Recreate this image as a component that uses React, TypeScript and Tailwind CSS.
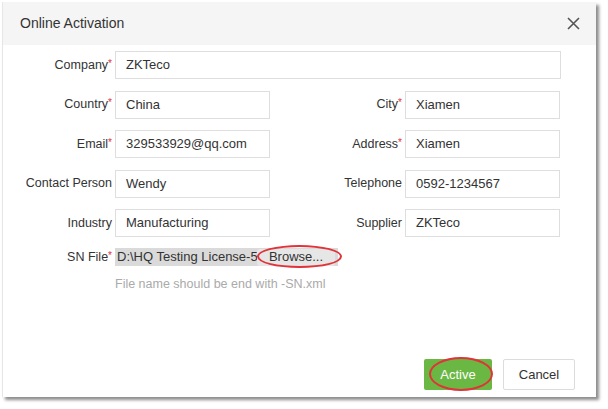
const font = { fontFamily: '"Liberation Sans", Arial, sans-serif' };

type Field = { label: string; value: string; required?: boolean };

const Label = ({ label, required, width }: { label: string; required?: boolean; width: string }) => (
    <div className={`${width} shrink-0 text-right text-[12.5px] text-[#333] leading-none`}>
        {label}
        {required && <span className="text-[#e0303a] text-[10px] align-top">*</span>}
    </div>
);

const Input = ({ value, width = 'w-[155px]' }: { value: string; width?: string }) => (
    <div className={`${width} h-[28px] ml-[3px] border border-[#dedede] bg-white flex items-center pl-[10px] text-[13px] text-[#333]`}>
        {value}
    </div>
);

const rows: [Field, Field][] = [
    [{ label: 'Country', value: 'China', required: true }, { label: 'City', value: 'Xiamen', required: true }],
    [{ label: 'Email', value: '329533929@qq.com', required: true }, { label: 'Address', value: 'Xiamen', required: true }],
    [{ label: 'Contact Person', value: 'Wendy' }, { label: 'Telephone', value: '0592-1234567' }],
    [{ label: 'Industry', value: 'Manufacturing' }, { label: 'Supplier', value: 'ZKTeco' }],
];

export default function App() {
    return (
        <div className="w-[608px] h-[409px] bg-white pt-[2px] pl-[2px]" style={font}>
            <div className="w-[594px] h-[395px] bg-white flex flex-col border-l border-[#e6e6e6] shadow-[3px_3px_3px_rgba(0,0,0,0.45)]">
                {/* Header */}
                <div className="h-[43px] bg-[#f5f5f5] flex items-center justify-between pl-[17px] pr-[16px]">
                    <span className="text-[14px] text-[#333]">Online Activation</span>
                    <svg width="13" height="13" viewBox="0 0 13 13" className="text-[#555]">
                        <path d="M1 1L12 12M12 1L1 12" stroke="currentColor" strokeWidth="1.6" />
                    </svg>
                </div>

                {/* Form */}
                <div className="flex flex-col gap-[11.5px] pt-[6px]">
                    <div className="flex items-center">
                        <Label label="Company" required width="w-[109px]" />
                        <Input value="ZKTeco" width="w-[446px]" />
                    </div>
                    {rows.map(([l, r]) => (
                        <div key={l.label} className="flex items-center">
                            <Label label={l.label} required={l.required} width="w-[109px]" />
                            <Input value={l.value} />
                            <Label label={r.label} required={r.required} width="w-[132px]" />
                            <Input value={r.value} />
                        </div>
                    ))}
                </div>

                {/* SN file */}
                <div className="flex items-center mt-[11px]">
                    <Label label="SN File" required width="w-[109px]" />
                    <div className="relative ml-[3px] w-[223px] h-[18px] bg-[#dadada] flex items-center text-[13px] text-[#333]">
                        <span className="w-[142px] overflow-hidden whitespace-nowrap pl-[2px]">D:\HQ Testing License-5(</span>
                        <span className="w-[78px] h-[17px] bg-[#e6e6e6] rounded-[3px] flex items-center justify-center">Browse...</span>
                        <div className="absolute left-[142px] top-[-3px] w-[85px] h-[23px] border-2 border-[#e0343a] rounded-[50%]" />
                    </div>
                </div>
                <div className="ml-[112px] mt-[9px] text-[12.5px] text-[#aaa]">File name should be end with -SN.xml</div>

                {/* Footer */}
                <div className="flex-1 flex items-end justify-end gap-[11px] pr-[21px] pb-[7px]">
                    <div className="relative w-[68px] h-[31px] bg-[#6ab843] rounded-[2px] flex items-center justify-center text-[13px] text-white">
                        Active
                        <div className="absolute left-[5px] top-[-2px] w-[64px] h-[34px] border-2 border-[#e0343a] rounded-[50%]" />
                    </div>
                    <div className="w-[72px] h-[31px] border border-[#dcdcdc] bg-white rounded-[2px] flex items-center justify-center text-[13px] text-[#333]">
                        Cancel
                    </div>
                </div>
            </div>
        </div>
    );
}
